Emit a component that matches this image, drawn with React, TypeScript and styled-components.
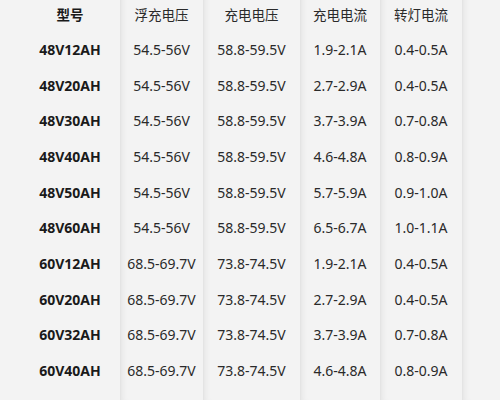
import React from "react";
import styled, { createGlobalStyle } from "styled-components";

const GlobalStyle = createGlobalStyle`
  html, body {
    margin: 0;
    padding: 0;
    background: #f3f3f3;
    overflow: hidden;
  }
  body {
    font-family: "Noto Sans", "Noto Sans CJK SC", sans-serif;
  }
`;

const Page = styled.div`
  width: 500px;
  height: 400px;
  overflow: hidden;
  display: flex;
  background: #f3f3f3;
`;

const Column = styled.div<{ width: number; shaded?: boolean }>`
  width: ${(props) => props.width}px;
  flex-shrink: 0;
  display: flex;
  flex-direction: column;
  margin-top: -4px;
  background: #f3f3f3;
  box-shadow: ${(props) =>
    props.shaded
      ? "inset 1px 0 0 #e4e4e4, inset 7px 0 6px -5px rgba(0, 0, 0, 0.07)"
      : "none"};
`;

const Cell = styled.div<{ bold?: boolean; head?: boolean }>`
  height: 35.67px;
  display: flex;
  align-items: center;
  justify-content: center;
  font-size: ${(props) => (props.head ? "13.5px" : "14px")};
  font-weight: ${(props) => (props.bold ? 700 : 400)};
  color: ${(props) => (props.bold ? "#1a1a1a" : "#2a2a2a")};
  white-space: nowrap;
  letter-spacing: 0;
`;

const Spacer = styled.div<{ width: number }>`
  width: ${(props) => props.width}px;
  flex-shrink: 0;
`;

const columns = [
  {
    title: "型号",
    width: 100,
    bold: true,
    values: [
      "48V12AH",
      "48V20AH",
      "48V30AH",
      "48V40AH",
      "48V50AH",
      "48V60AH",
      "60V12AH",
      "60V20AH",
      "60V32AH",
      "60V40AH",
    ],
  },
  {
    title: "浮充电压",
    width: 83,
    values: [
      "54.5-56V",
      "54.5-56V",
      "54.5-56V",
      "54.5-56V",
      "54.5-56V",
      "54.5-56V",
      "68.5-69.7V",
      "68.5-69.7V",
      "68.5-69.7V",
      "68.5-69.7V",
    ],
  },
  {
    title: "充电电压",
    width: 97,
    values: [
      "58.8-59.5V",
      "58.8-59.5V",
      "58.8-59.5V",
      "58.8-59.5V",
      "58.8-59.5V",
      "58.8-59.5V",
      "73.8-74.5V",
      "73.8-74.5V",
      "73.8-74.5V",
      "73.8-74.5V",
    ],
  },
  {
    title: "充电电流",
    width: 80,
    values: [
      "1.9-2.1A",
      "2.7-2.9A",
      "3.7-3.9A",
      "4.6-4.8A",
      "5.7-5.9A",
      "6.5-6.7A",
      "1.9-2.1A",
      "2.7-2.9A",
      "3.7-3.9A",
      "4.6-4.8A",
    ],
  },
  {
    title: "转灯电流",
    width: 82,
    values: [
      "0.4-0.5A",
      "0.4-0.5A",
      "0.7-0.8A",
      "0.8-0.9A",
      "0.9-1.0A",
      "1.0-1.1A",
      "0.4-0.5A",
      "0.4-0.5A",
      "0.7-0.8A",
      "0.8-0.9A",
    ],
  },
];

export default function App() {
  return (
    <>
      <GlobalStyle />
      <Page>
        <Spacer width={20} />
        {columns.map((col, i) => (
          <Column key={col.title} width={col.width} shaded={i > 0}>
            <Cell head bold={col.bold}>
              {col.title}
            </Cell>
            {col.values.map((v, j) => (
              <Cell key={j} bold={col.bold}>
                {v}
              </Cell>
            ))}
          </Column>
        ))}
        <Column width={38} shaded />
      </Page>
    </>
  );
}
